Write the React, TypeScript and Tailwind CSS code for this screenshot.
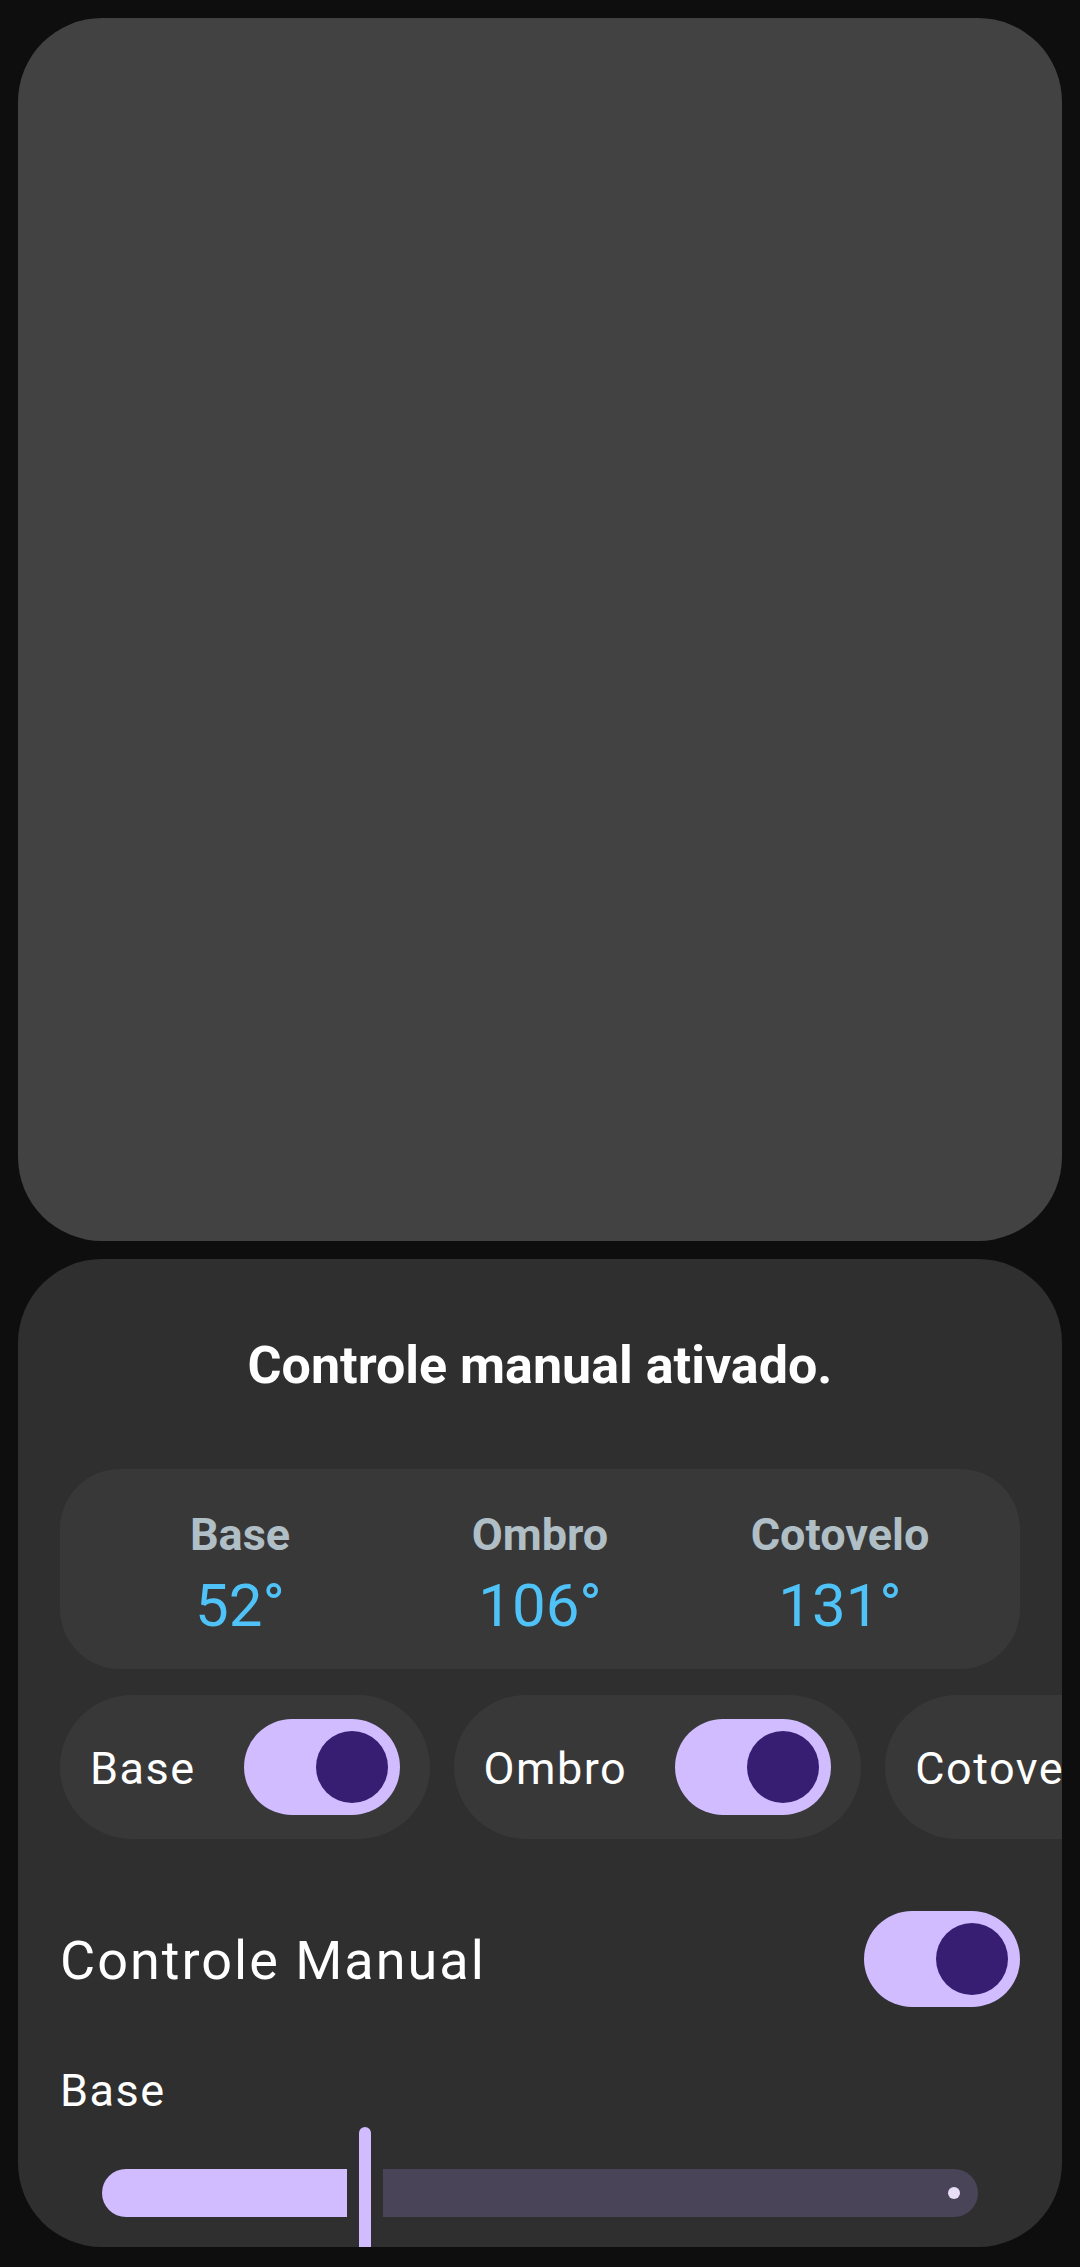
import React from "react"

const font = { fontFamily: "Roboto, 'Noto Sans', sans-serif" }

function Switch() {
  return (
    <div className="flex h-[96px] w-[156px] shrink-0 items-center justify-end rounded-full bg-[#d0bcff] pr-[12px]">
      <div className="h-[72px] w-[72px] rounded-full bg-[#381e72]" />
    </div>
  )
}

function Chip({ label }: { label: string }) {
  return (
    <div className="flex h-[144px] shrink-0 items-center gap-[48px] rounded-full bg-[#383838] pl-[30px] pr-[30px]">
      <span className="pt-[4px] text-[45px] leading-[54px] tracking-[1.5px] text-white">{label}</span>
      <Switch />
    </div>
  )
}

function Angle({ label, value }: { label: string; value: string }) {
  return (
    <div className="flex flex-1 flex-col items-center">
      <span className="text-[45px] font-bold leading-[52px] text-[#b0bec5]">{label}</span>
      <span className="mt-[10px] text-[60px] leading-[70px] text-[#4fc3f7]">{value}</span>
    </div>
  )
}

export default function App() {
  return (
    <div className="flex min-h-[2267px] flex-col gap-[18px] bg-[#0e0e0e] p-[18px]" style={font}>
      <div className="h-[1223px] rounded-[84px] bg-[#424242]" />

      <div className="h-[988px] overflow-hidden rounded-[84px] bg-[#2f2f2f] px-[42px] pt-[76px]">
        <h1 className="text-center text-[52px] font-bold leading-[62px] text-white">Controle manual ativado.</h1>

        <div className="mt-[72px] flex h-[200px] items-center rounded-[60px] bg-[#383838] px-[30px] pt-[12px]">
          <Angle label="Base" value="52°" />
          <Angle label="Ombro" value="106°" />
          <Angle label="Cotovelo" value="131°" />
        </div>

        <div className="mt-[26px] flex gap-[24px]">
          <Chip label="Base" />
          <Chip label="Ombro" />
          <Chip label="Cotovelo" />
        </div>

        <div className="mt-[72px] flex h-[96px] items-center justify-between">
          <span className="pt-[4px] text-[54px] leading-[64px] tracking-[2px] text-white">Controle Manual</span>
          <Switch />
        </div>

        <div className="mt-[57px] text-[45px] leading-[54px] tracking-[1.5px] text-white">Base</div>

        <div className="mt-[9px] flex h-[132px] items-center px-[42px]">
          <div className="h-[48px] w-[245px] rounded-l-full rounded-r-[6px] bg-[#d0bcff]" />
          <div className="ml-[12px] h-[132px] w-[12px] rounded-full bg-[#d0bcff]" />
          <div className="ml-[12px] flex h-[48px] flex-1 items-center justify-end rounded-l-[6px] rounded-r-full bg-[#4a4458] pr-[18px]">
            <div className="h-[12px] w-[12px] rounded-full bg-[#e8def8]" />
          </div>
        </div>
      </div>
    </div>
  )
}
